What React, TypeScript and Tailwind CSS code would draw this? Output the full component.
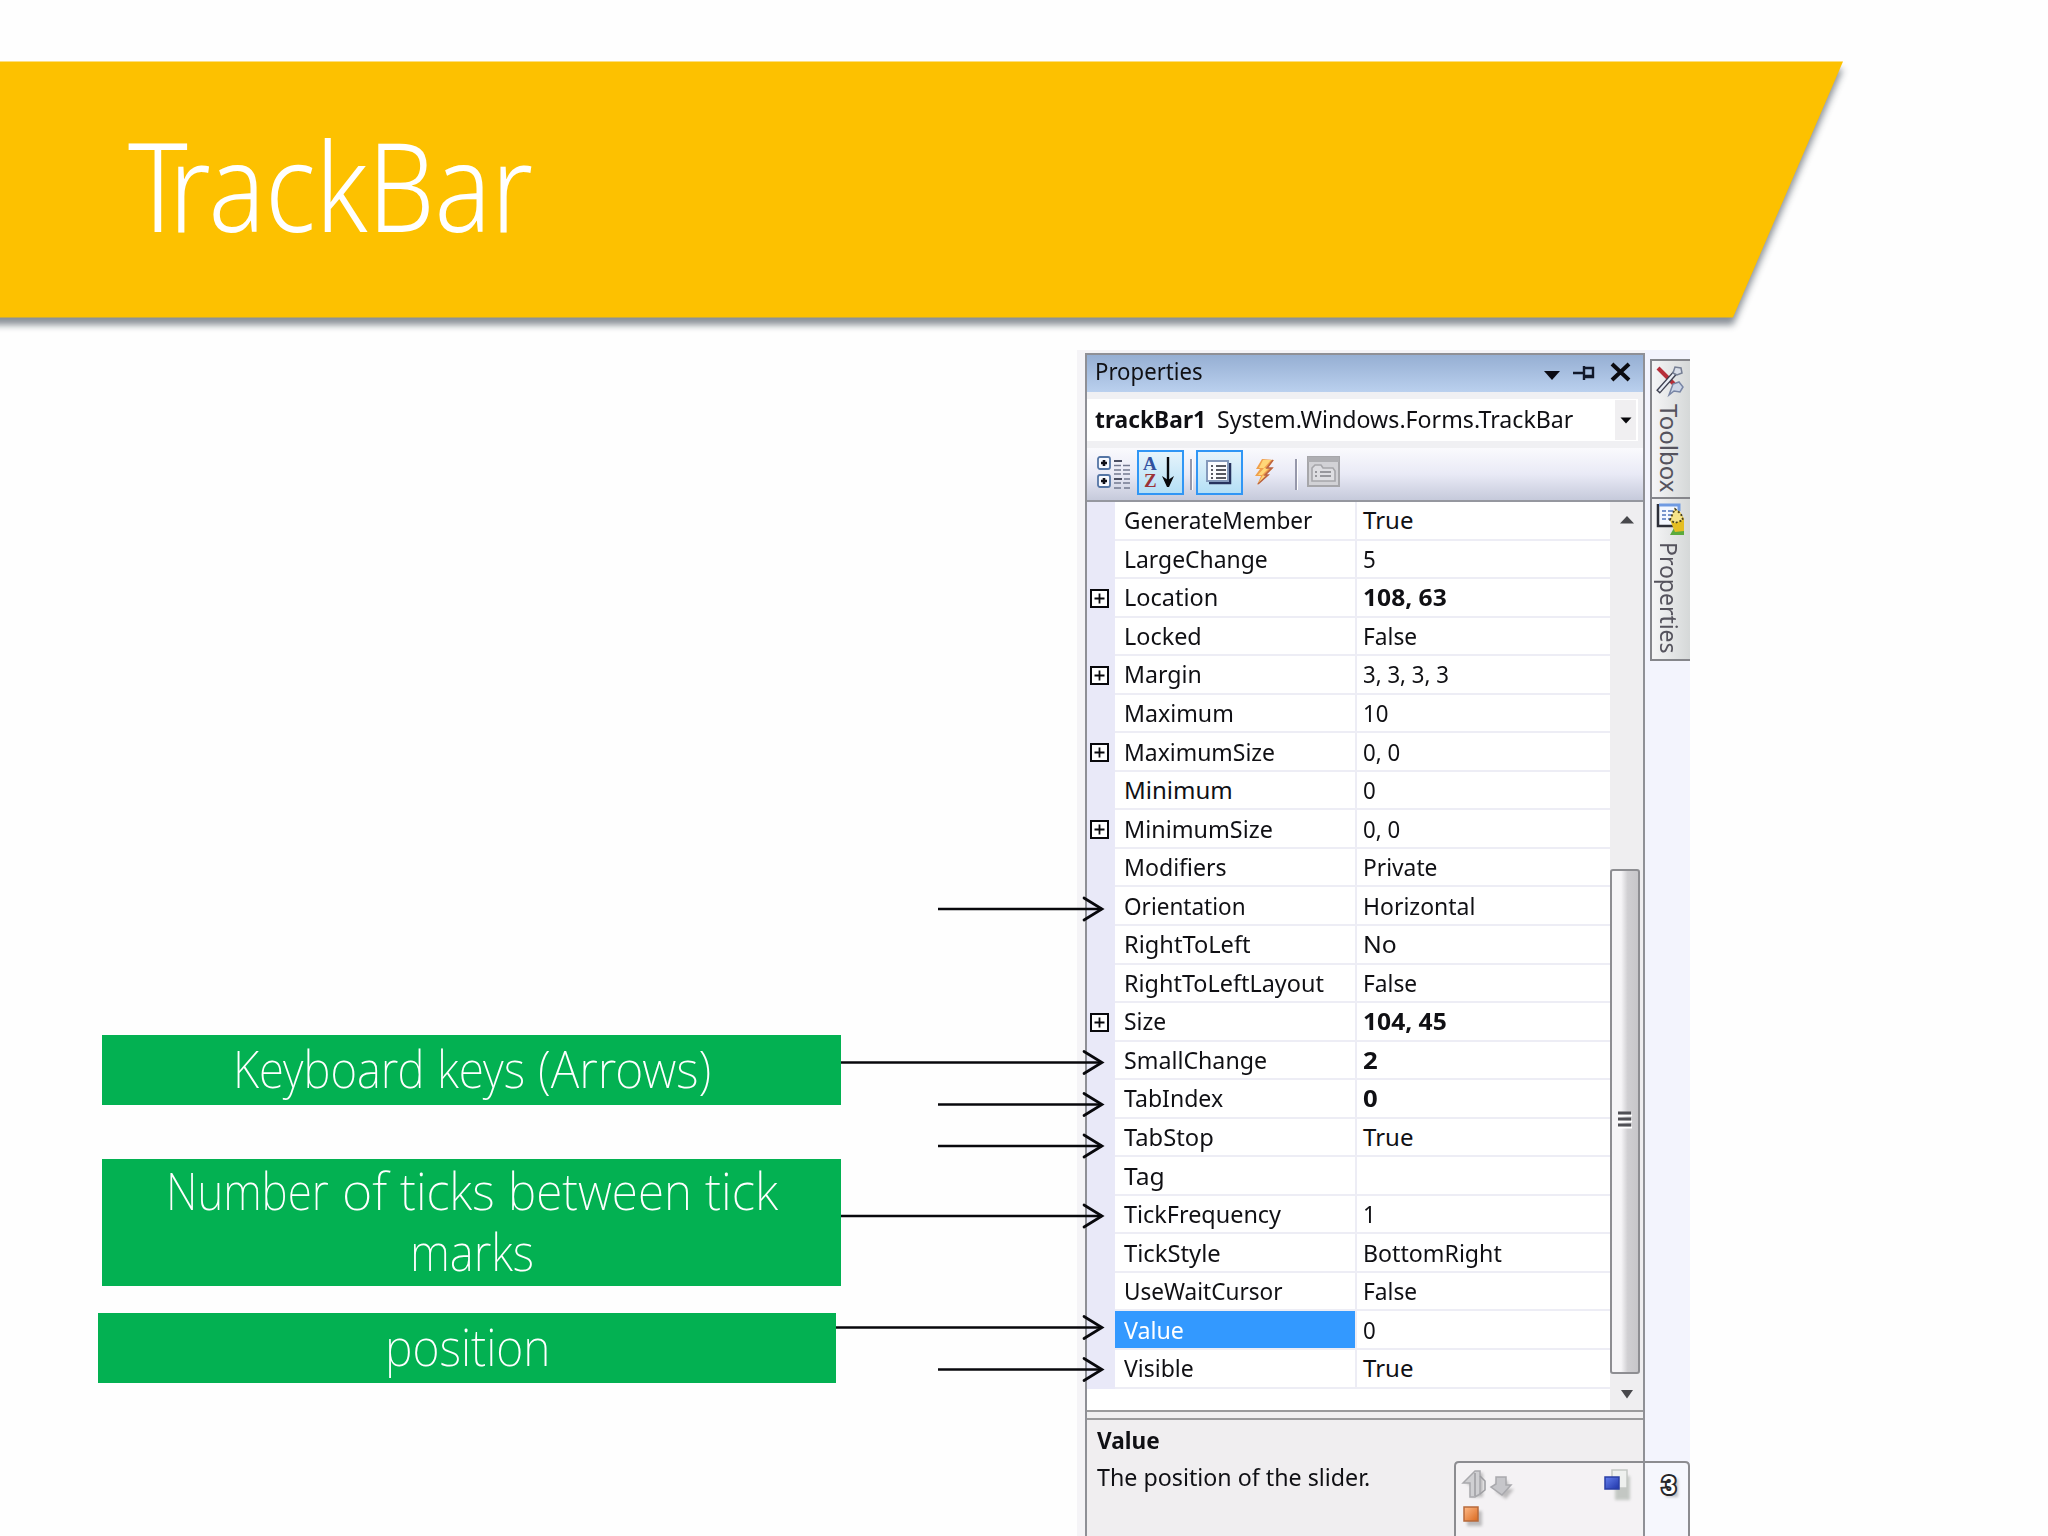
import { useLayoutEffect, useRef, useState } from 'react';

interface Prop {
  name: string;
  nameWidth: number;
  value: string;
  valueWidth: number;
  bold?: boolean;
  expandable?: boolean;
}

interface Word {
  text: string;
  size: number;
}

const properties: Prop[] = [
  { name: 'GenerateMember', nameWidth: 188, value: 'True', valueWidth: 50 },
  { name: 'LargeChange', nameWidth: 144, value: '5', valueWidth: 13 },
  { name: 'Location', nameWidth: 94, value: '108, 63', valueWidth: 84, bold: true, expandable: true },
  { name: 'Locked', nameWidth: 78, value: 'False', valueWidth: 54 },
  { name: 'Margin', nameWidth: 78, value: '3, 3, 3, 3', valueWidth: 86, expandable: true },
  { name: 'Maximum', nameWidth: 110, value: '10', valueWidth: 25 },
  { name: 'MaximumSize', nameWidth: 151, value: '0, 0', valueWidth: 37, expandable: true },
  { name: 'Minimum', nameWidth: 109, value: '0', valueWidth: 13 },
  { name: 'MinimumSize', nameWidth: 149, value: '0, 0', valueWidth: 37, expandable: true },
  { name: 'Modifiers', nameWidth: 103, value: 'Private', valueWidth: 74 },
  { name: 'Orientation', nameWidth: 122, value: 'Horizontal', valueWidth: 112 },
  { name: 'RightToLeft', nameWidth: 127, value: 'No', valueWidth: 34 },
  { name: 'RightToLeftLayout', nameWidth: 200, value: 'False', valueWidth: 54 },
  { name: 'Size', nameWidth: 42, value: '104, 45', valueWidth: 84, bold: true, expandable: true },
  { name: 'SmallChange', nameWidth: 143, value: '2', valueWidth: 15, bold: true },
  { name: 'TabIndex', nameWidth: 99, value: '0', valueWidth: 15, bold: true },
  { name: 'TabStop', nameWidth: 90, value: 'True', valueWidth: 50 },
  { name: 'Tag', nameWidth: 41, value: '', valueWidth: 0 },
  { name: 'TickFrequency', nameWidth: 157, value: '1', valueWidth: 13 },
  { name: 'TickStyle', nameWidth: 97, value: 'BottomRight', valueWidth: 139 },
  { name: 'UseWaitCursor', nameWidth: 159, value: 'False', valueWidth: 54 },
  { name: 'Value', nameWidth: 60, value: '0', valueWidth: 13 },
  { name: 'Visible', nameWidth: 70, value: 'True', valueWidth: 50 },
];

const arrows = [
  { from: 938, y: 909 },
  { from: 841, y: 1062.5 },
  { from: 938, y: 1104.5 },
  { from: 938, y: 1146 },
  { from: 841, y: 1216 },
  { from: 836, y: 1327.5 },
  { from: 938, y: 1369.5 },
];

// Squeezes or stretches one line of text to the given length
function Fit({ text, size, vertical = false }: { text: string; size: number; vertical?: boolean }) {
  const ref = useRef<HTMLSpanElement>(null);
  const [scale, setScale] = useState(1);

  useLayoutEffect(() => {
    const el = ref.current;
    if (!el) return;
    const natural = vertical ? el.offsetHeight : el.offsetWidth;
    if (natural > 0) setScale(size / natural);
  }, [text, size, vertical]);

  return (
    <span className="block" style={vertical ? { height: size } : { width: size }}>
      <span
        ref={ref}
        className={vertical ? 'inline-block origin-top whitespace-nowrap [writing-mode:vertical-rl]' : 'inline-block origin-left whitespace-nowrap'}
        style={{ transform: vertical ? `scaleY(${scale})` : `scaleX(${scale})` }}
      >
        {text}
      </span>
    </span>
  );
}

function Words({ words }: { words: Word[] }) {
  return (
    <div className="flex justify-center gap-[13px]">
      {words.map(word => (
        <Fit key={word.text} text={word.text} size={word.size} />
      ))}
    </div>
  );
}

function Banner() {
  return (
    <header className="relative h-[257px] w-full">
      <svg className="absolute left-0 top-0 overflow-visible" width="1860" height="257" viewBox="0 0 1860 257">
        <defs>
          <filter id="bannerShadow" x="-5%" y="-10%" width="110%" height="125%">
            <feGaussianBlur stdDeviation="3.5" />
          </filter>
        </defs>
        <path d="M-30 8H1843L1733 264H-30Z" fill="#4b5560" opacity="0.65" filter="url(#bannerShadow)" />
        <path d="M0 0.5H1843L1733 256.5H0Z" fill="#fdc100" />
      </svg>
      <h1 className="relative flex pl-[128px] pt-[38px] text-[124px] font-[270] leading-[170px] text-white">
        <Fit text="T" size={60} />
        <span className="-ml-[19px]">
          <Fit text="rackBar" size={364} />
        </span>
      </h1>
    </header>
  );
}

function Labels() {
  return (
    <section className="w-[1077px] pt-[717px] text-[51px] font-extralight leading-[61px] text-white">
      <div className="ml-[102px] h-[70px] w-[739px] bg-[#03b152] pt-[3px]">
        <Words words={[{ text: 'Keyboard', size: 191 }, { text: 'keys', size: 88 }, { text: '(Arrows)', size: 173 }]} />
      </div>
      <div className="ml-[102px] mt-[54px] h-[127px] w-[739px] bg-[#03b152] pt-px">
        <Words
          words={[
            { text: 'Number', size: 163 },
            { text: 'of', size: 45 },
            { text: 'ticks', size: 95 },
            { text: 'between', size: 184 },
            { text: 'tick', size: 73 },
          ]}
        />
        <Words words={[{ text: 'marks', size: 124 }]} />
      </div>
      <div className="ml-[98px] mt-[27px] h-[70px] w-[738px] bg-[#03b152] pt-[3px]">
        <Words words={[{ text: 'position', size: 165 }]} />
      </div>
    </section>
  );
}

function TitleBar() {
  return (
    <div className="flex h-[37px] items-start justify-between bg-linear-to-b from-[#96afd3] to-[#bad0ee] pl-[8px] leading-[32px]">
      <Fit text="Properties" size={108} />
      <svg width="105" height="36" viewBox="0 0 105 36">
        <path d="M6 16H22L14 25Z" fill="#0b0b14" />
        <path d="M35 18H45M46 11V25M46 13H55V22H46M46 21H56" stroke="#11182a" strokeWidth="2.4" fill="none" />
        <path d="M74 9L91 25M91 9L74 25" stroke="#0b0b10" strokeWidth="4" fill="none" />
      </svg>
    </div>
  );
}

function ObjectPicker() {
  return (
    <div className="flex h-[56px] items-center bg-[#f0f0f3] py-[7px] pr-[5px]">
      <div className="flex h-full flex-1 items-center bg-white pb-[2px] pl-[8px]">
        <span className="font-bold">
          <Fit text="trackBar1" size={111} />
        </span>
        <span className="ml-[11px]">
          <Fit text="System.Windows.Forms.TrackBar" size={356} />
        </span>
      </div>
      <div className="flex h-full items-center justify-center bg-white py-px pr-[2px]">
        <div className="flex h-full w-[21px] items-center justify-center bg-[#f0eff1]">
          <svg width="12" height="7" viewBox="0 0 12 7">
            <path d="M0.5 0.5H11.5L6 6.5Z" fill="#08080c" />
          </svg>
        </div>
      </div>
    </div>
  );
}

function CategorizedIcon() {
  return (
    <svg width="34" height="34" viewBox="0 0 34 34">
      {[1, 19].map(y => (
        <g key={y}>
          <rect x="1" y={y} width="12" height="12" rx="2" fill="#f8faff" stroke="#5475a5" strokeWidth="1.8" />
          <path d={`M4 ${y + 6}H10M7 ${y + 3}V${y + 9}`} stroke="#101018" strokeWidth="2.6" />
        </g>
      ))}
      <path d="M17 5H25M17 23H25" stroke="#4b4f63" strokeWidth="2" />
      <path d="M17 9.500H33M17 14H33M17 18H33M27 23H33M17 27H33M27 32H33M17 32H24" stroke="#737990" strokeWidth="1.6" strokeDasharray="7 2" />
    </svg>
  );
}

function Toolbar() {
  return (
    <div className="flex h-[54px] items-start border-b-2 border-[#95979f] bg-linear-to-b from-[#fafafd] via-[#e9eaf6] to-[#c6cadb] pl-[10px] pt-[2px]">
      <div className="pt-[6px]">
        <CategorizedIcon />
      </div>
      <div className="ml-[6px] h-[45px] w-[47px] border-2 border-[#3096f5] bg-linear-to-b from-[#e6f4fb] to-[#b4dff6]">
        <svg width="43" height="41" viewBox="0 0 43 41">
          <text x="4" y="18" fontFamily="Liberation Serif, serif" fontWeight="700" fontSize="19" fill="#31519f">A</text>
          <text x="5" y="35" fontFamily="Liberation Serif, serif" fontWeight="700" fontSize="19" fill="#9b3338">Z</text>
          <path d="M29 5V33" stroke="#08080c" strokeWidth="2.4" />
          <path d="M23 24L29 28L35 24L30 35H28Z" fill="#08080c" />
        </svg>
      </div>
      <div className="ml-[6px] mt-[9px] h-[31px] w-[3px] border-l-2 border-[#9698ab] bg-white" />
      <div className="ml-[3px] h-[45px] w-[47px] border-2 border-[#3096f5] bg-linear-to-b from-[#e6f4fb] to-[#b4dff6]">
        <svg width="43" height="41" viewBox="0 0 43 41">
          <path d="M11 31H32V11" stroke="#26335e" strokeWidth="2.5" fill="none" />
          <rect x="9" y="9" width="21" height="20" fill="#fbfcff" stroke="#8499bb" strokeWidth="2" />
          <path d="M13 14H15M18 14H28M13 18H15M18 18H28M13 22H15M18 22H28M13 26H15M18 26H28" stroke="#22232f" strokeWidth="1.6" />
        </svg>
      </div>
      <svg className="ml-[11px] mt-[8px]" width="21" height="28" viewBox="0 0 21 28">
        <path d="M8 1L20 2L14 10H19L12 17H15L3 27L7 18H1L6 11H2Z" fill="#f0a04c" />
        <path d="M9 2L5 10H10L4 17H9L4 26L12 17H8L15 10H10L17 2Z" fill="#ffd778" />
        <path d="M19 2L13 10H18L11 17H14L4 26" stroke="#b96343" strokeWidth="1.5" fill="none" />
      </svg>
      <div className="ml-[20px] mt-[9px] h-[31px] w-[3px] border-l-2 border-[#9698ab] bg-white" />
      <svg className="ml-[9px] mt-[6px]" width="34" height="32" viewBox="0 0 34 32">
        <rect x="1" y="1" width="31" height="29" fill="#d2d2d6" stroke="#a6a6aa" strokeWidth="2" />
        <rect x="1" y="1" width="31" height="5" fill="#aeaeb2" />
        <path d="M5 25V12L8 9H14L16 12H26L28 15V25Z" fill="#dedee2" stroke="#a6a6aa" strokeWidth="1.6" />
        <path d="M8 16H10M13 16H24M8 20H10M13 20H24" stroke="#97979c" strokeWidth="2" />
      </svg>
    </div>
  );
}

function PropertyRow({ item }: { item: Prop }) {
  const selected = item.name === 'Value';

  return (
    <div className="flex h-[38.55px]">
      <div className="flex w-[28px] items-center pl-[3px]">
        {item.expandable && (
          <svg width="19" height="19" viewBox="0 0 19 19">
            <rect x="1" y="1" width="17" height="17" fill="#fff" stroke="#08080c" strokeWidth="2" />
            <path d="M4.500 9.500H14.500M9.500 4.500V14.500" stroke="#08080c" strokeWidth="1.8" />
          </svg>
        )}
      </div>
      <div className={`flex w-[240px] items-center border-b-2 border-[#ededf5] pl-[9px] ${selected ? 'bg-[#3399ff] text-white' : 'bg-white'}`}>
        <Fit text={item.name} size={item.nameWidth} />
      </div>
      <div className={`flex flex-1 items-center border-b-2 border-l-2 border-[#ededf5] bg-white pl-[6px] ${item.bold ? 'font-bold' : ''}`}>
        {item.value && <Fit text={item.value} size={item.valueWidth} />}
      </div>
    </div>
  );
}

function ScrollBar() {
  return (
    <div className="flex w-[33px] flex-col bg-[#efeef0]">
      <svg className="ml-[10px] mt-[13px] shrink-0" width="14" height="9" viewBox="0 0 14 9">
        <path d="M0 8.500L7 1L14 8.500Z" fill="#48484c" />
      </svg>
      <div className="mt-[345px] flex h-[505px] w-[30px] items-center justify-center rounded-[3px] border-2 border-[#8e8e92] bg-linear-to-r from-[#f6f5f7] from-35% via-[#d0cfd2] via-60% to-[#c8c7ca]">
        <svg className="mb-[4px]" width="15" height="18" viewBox="0 0 15 18">
          <path d="M0 4.500H14M0 10.500H14M0 16.500H14" stroke="#fff" strokeWidth="2" />
          <path d="M0 2H13M0 8H13M0 14H13" stroke="#505055" strokeWidth="3" />
        </svg>
      </div>
      <svg className="ml-[10px] mt-[16px] shrink-0" width="14" height="9" viewBox="0 0 14 9">
        <path d="M1 0H13L7 8.500Z" fill="#48484c" />
      </svg>
    </div>
  );
}

function Description() {
  return (
    <div className="flex flex-1 flex-col border-t-2 border-[#9a9a9c] bg-[#f0eef0] pl-[10px] pt-[3px]">
      <div className="h-[36px] font-bold leading-[34px]">
        <Fit text="Value" size={63} />
      </div>
      <div className="leading-[35px]">
        <Fit text="The position of the slider." size={273} />
      </div>
    </div>
  );
}

function PropertiesPanel() {
  return (
    <div className="flex h-[1183px] w-[560px] flex-col border-x-2 border-t-2 border-[#8f9096] text-[24px] leading-[34px] text-[#101014]">
      <TitleBar />
      <ObjectPicker />
      <Toolbar />
      <div className="flex h-[910px] border-b-2 border-[#9a9a9c] bg-white">
        <div className="flex-1">
          <div className="bg-[#e9e9f8]">
            {properties.map(item => (
              <PropertyRow key={item.name} item={item} />
            ))}
          </div>
        </div>
        <ScrollBar />
      </div>
      <div className="h-[6px] bg-[#f0eff1]" />
      <Description />
    </div>
  );
}

function SideTabs() {
  return (
    <aside className="flex w-[45px] flex-col bg-[#f3f4fd] pl-[5px] pt-[9px] text-[24px] leading-[28px] text-[#55535d]">
      <div className="flex h-[138px] flex-col border-l-2 border-t-2 border-[#85868b] bg-linear-to-r from-[#f5f5f6] to-[#d5d8d8] pl-[3px] pt-[5px]">
        <svg className="ml-px" width="28" height="32" viewBox="0 0 28 32">
          <path d="M2 2L18 18" stroke="#b72e39" strokeWidth="4" />
          <path d="M2 26L19 7" stroke="#3e4050" strokeWidth="5" />
          <path d="M3 25L18 8" stroke="#e9edf5" strokeWidth="2.500" />
          <path d="M17 7L19 1L25 2L26 7L21 9Z" fill="#d9dee8" stroke="#778095" strokeWidth="1.500" />
          <path d="M13 29L17 18L23 16L27 21L24 26L18 25Z" fill="#ccd6e8" stroke="#7885a5" strokeWidth="1.500" />
        </svg>
        <div className="mt-[6px]">
          <Fit text="Toolbox" size={88} vertical />
        </div>
      </div>
      <div className="flex h-[164px] flex-col border-y-2 border-l-2 border-[#85868b] bg-linear-to-r from-[#f5f5f6] to-[#d5d8d8] pl-[3px] pt-[4px]">
        <svg className="ml-px" width="30" height="33" viewBox="0 0 30 33">
          <rect x="2" y="1" width="21" height="22" fill="#f4f8ff" />
          <path d="M2 1V23H18" stroke="#2e3039" strokeWidth="2.500" fill="none" />
          <path d="M3 2H23V8" stroke="#709be2" strokeWidth="3" fill="none" />
          <path d="M6 8H10M6 12H10M6 16H10M12 8H17M12 12H17M12 16H17" stroke="#7895cc" strokeWidth="1.800" />
          <path d="M14 32L18 25H28V32Z" fill="#5baa3d" />
          <path d="M14 17L19 6L24 9L28 16V28L19 29Z" fill="#e5be23" />
          <path d="M14 17L17 10L19 6L25 11L27 17L19 20Z" stroke="#4a401c" strokeWidth="1.800" strokeDasharray="2 2" fill="#f5e389" />
        </svg>
        <div className="mt-[6px]">
          <Fit text="Properties" size={112} vertical />
        </div>
      </div>
    </aside>
  );
}

// Translucent tray that hangs over the lower right corner of the panel
function Tray() {
  return (
    <svg className="absolute left-[1454px] top-[1461px]" width="237" height="75" viewBox="0 0 237 75">
      <defs>
        <linearGradient id="orange" x1="0" y1="0" x2="1" y2="1">
          <stop offset="0" stopColor="#ffba88" />
          <stop offset="1" stopColor="#d9691f" />
        </linearGradient>
        <linearGradient id="blue" x1="0" y1="0" x2="1" y2="1">
          <stop offset="0" stopColor="#6580ed" />
          <stop offset="1" stopColor="#1e34a8" />
        </linearGradient>
        <filter id="soft" x="-30%" y="-30%" width="160%" height="160%">
          <feGaussianBlur stdDeviation="1.5" />
        </filter>
      </defs>
      <path d="M1 80V5Q1 1 5 1H231Q235 1 235 5V80" fill="#fff" fillOpacity="0.25" stroke="#8c8c90" strokeWidth="2" />
      <path d="M190 0V75" stroke="#8f9096" strokeWidth="2" />
      <g filter="url(#soft)" opacity="0.35">
        <path d="M12 22L25 12H29V36H17V25ZM42 20H54V28H60L52 38L42 31Z" fill="#555" />
        <rect x="13" y="50" width="15" height="15" fill="#555" />
        <rect x="161" y="15" width="15" height="24" fill="#6b7a6b" />
      </g>
      <path d="M9 22L21 10H26V33L21 36H16V22Z" fill="#cfcfd2" stroke="#a9a9ad" strokeWidth="1.500" />
      <path d="M21 12V35M26 15L31 20V29L26 33" stroke="#9d9da1" strokeWidth="1.500" fill="none" />
      <path d="M42 16H52V24H57L48 34L37 26L42 23Z" fill="#c6c6ca" stroke="#a9a9ad" strokeWidth="1.500" />
      <rect x="158" y="9" width="15" height="18" fill="#eef0ee" stroke="#c4c8c4" strokeWidth="1.500" />
      <rect x="151" y="16" width="14" height="12" fill="url(#blue)" stroke="#2a3fa5" strokeWidth="1.500" />
      <rect x="10" y="46" width="14" height="14" fill="url(#orange)" stroke="#b76a3b" strokeWidth="1.500" />
      <path d="M212 18H224V36H212Z" fill="#555" opacity="0.35" filter="url(#soft)" />
      <text x="208" y="33" fontFamily="Liberation Sans, sans-serif" fontWeight="700" fontSize="25" fill="#fff" stroke="#26262a" strokeWidth="4" paintOrder="stroke">3</text>
    </svg>
  );
}

export default function App() {
  return (
    <div className="relative h-[1536px] w-[2048px] overflow-hidden bg-[#fefefe] pt-[61px] font-['Noto_Sans','Open_Sans',sans-serif]">
      <Banner />
      <main className="flex">
        <Labels />
        <div className="mt-[32px] flex h-[1186px] bg-[#f5f4f7] pl-[8px]">
          <div className="pt-[3px]">
            <PropertiesPanel />
          </div>
          <SideTabs />
        </div>
      </main>
      <Tray />
      <svg className="absolute left-0 top-0" width="1120" height="1536" viewBox="0 0 1120 1536">
        {arrows.map(arrow => (
          <g key={arrow.y} stroke="#08080c" strokeWidth="2.700" fill="none">
            <path d={`M${arrow.from} ${arrow.y}H1102`} />
            <path d={`M1084 ${arrow.y - 11}L1102 ${arrow.y}L1084 ${arrow.y + 11}`} strokeLinecap="round" />
          </g>
        ))}
      </svg>
    </div>
  );
}
